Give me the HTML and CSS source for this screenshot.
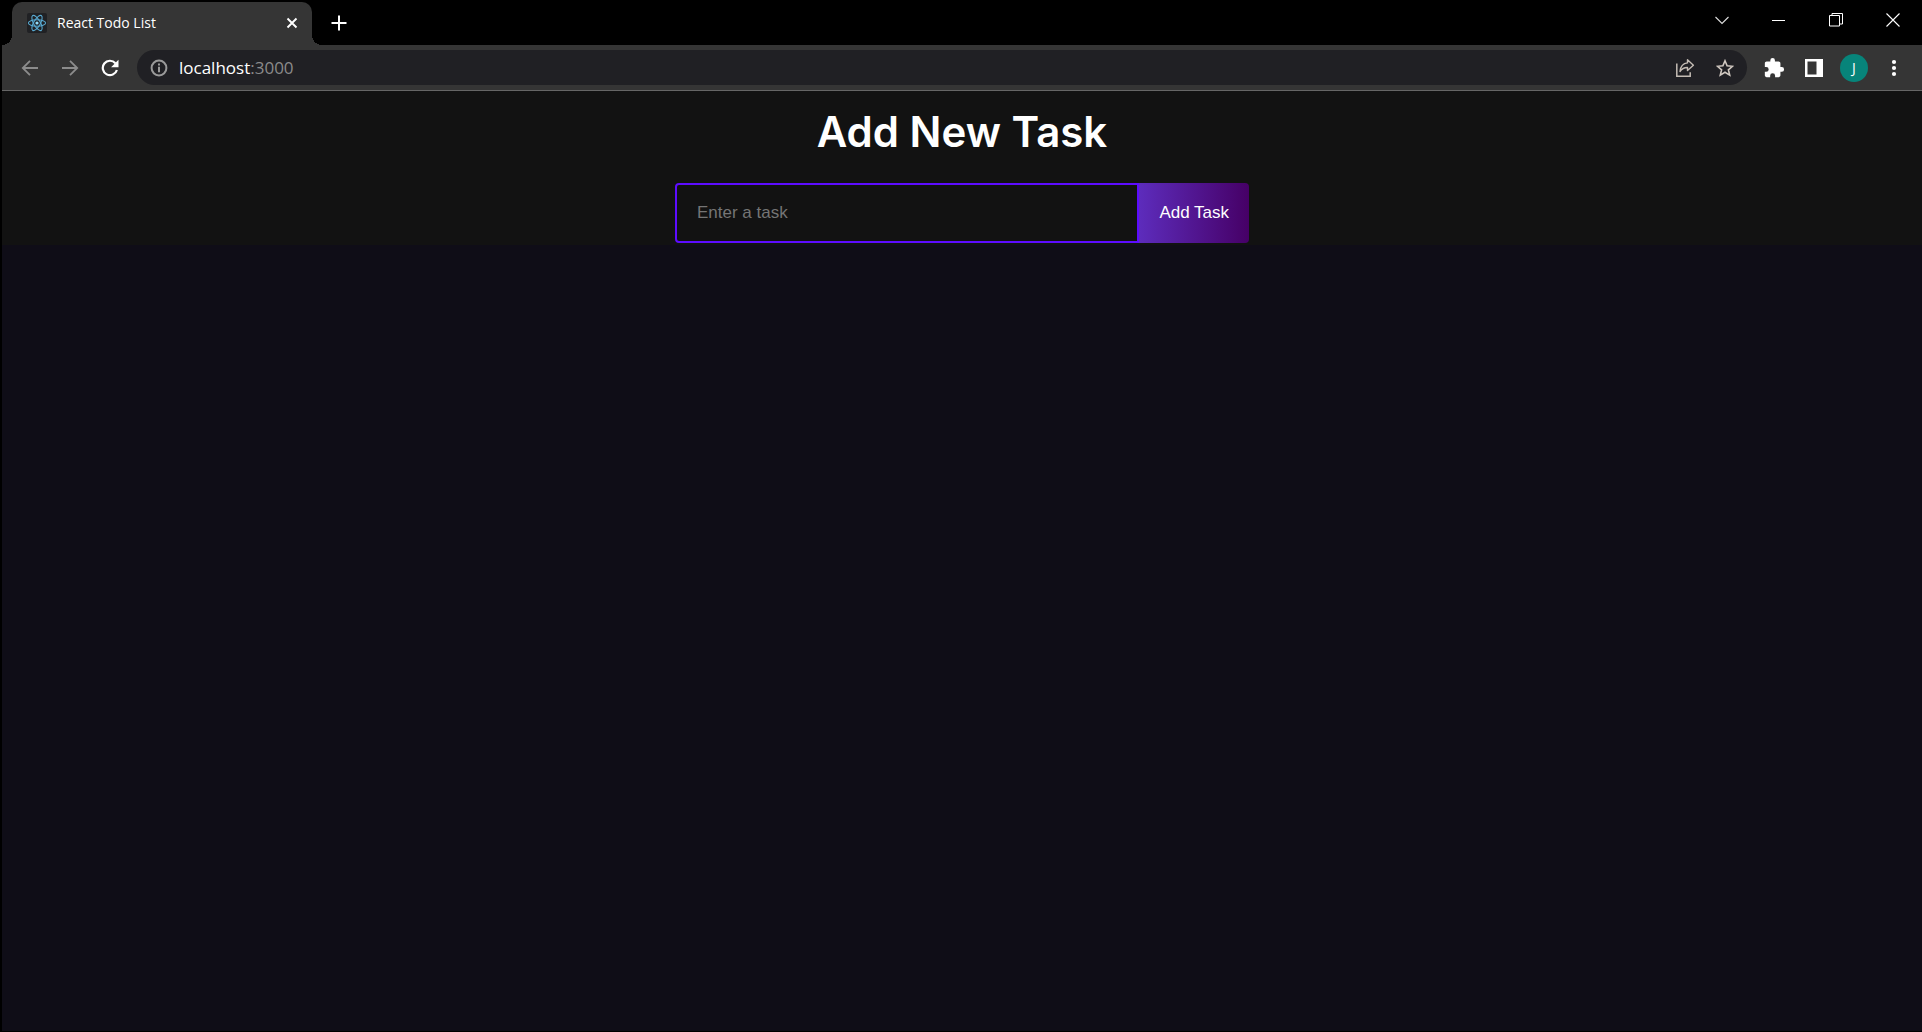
FILE: index.html
```html
<!DOCTYPE html>
<html lang="en">
<head>
<meta charset="utf-8">
<meta name="viewport" content="width=device-width, initial-scale=1">
<title>React Todo List</title>
<link rel="stylesheet" href="styles.css">
</head>
<body>
<div class="browser">
  <div class="titlebar">
    <div class="tab">
      <svg class="favicon" width="20" height="20" viewBox="0 0 20 20" aria-hidden="true">
        <rect width="20" height="20" rx="2" fill="#202124"/>
        <g fill="none" stroke="#58a9d0" stroke-width="1.1">
          <ellipse cx="10" cy="10" rx="8.6" ry="3.3"/>
          <ellipse cx="10" cy="10" rx="8.6" ry="3.3" transform="rotate(60 10 10)"/>
          <ellipse cx="10" cy="10" rx="8.6" ry="3.3" transform="rotate(120 10 10)"/>
        </g>
        <circle cx="10" cy="10" r="1.6" fill="#8fdcfa"/>
      </svg>
      <span class="tab-title">React Todo List</span>
      <button class="tab-close" type="button" aria-label="Close tab">
        <svg width="12" height="12" viewBox="0 0 12 12"><path d="M1.5 1.5l9 9M10.500 1.5l-9 9" stroke="#fff" stroke-width="1.9"/></svg>
      </button>
    </div>
    <button class="new-tab" type="button" aria-label="New tab">
      <svg width="16" height="16" viewBox="0 0 16 16"><path d="M8 .5v15M.5 8h15" stroke="#fff" stroke-width="2"/></svg>
    </button>
    <div class="window-controls">
      <button type="button" aria-label="Search tabs"><svg width="14" height="14" viewBox="0 0 14 14"><path d="M.5 4L7 10.500 13.500 4" fill="none" stroke="#ddd" stroke-width="1.1"/></svg></button>
      <button type="button" aria-label="Minimize"><svg width="14" height="14" viewBox="0 0 14 14"><path d="M0 7.500h13" stroke="#fff"/></svg></button>
      <button type="button" aria-label="Restore"><svg width="14" height="14" viewBox="0 0 14 14"><path d="M.5 2.500h10v10.500H.5zM3 2.500V.5h10.500v10.500H11" fill="none" stroke="#fff"/></svg></button>
      <button type="button" aria-label="Close"><svg width="14" height="14" viewBox="0 0 14 14"><path d="M.5 .5l13 13M13.500 .5l-13 13" stroke="#fff" stroke-width="1.1"/></svg></button>
    </div>
  </div>

  <div class="toolbar">
    <button class="nav" type="button" aria-label="Back"><svg width="18" height="16" viewBox="0 0 18 16"><path d="M17 8H2M9 .8L1.800 8 9 15.200" fill="none" stroke="#8c8c8c" stroke-width="1.8"/></svg></button>
    <button class="nav" type="button" aria-label="Forward"><svg width="18" height="16" viewBox="0 0 18 16"><path d="M1 8h15M9 .8L16.200 8 9 15.200" fill="none" stroke="#8c8c8c" stroke-width="1.8"/></svg></button>
    <button class="nav" type="button" aria-label="Reload"><svg width="20" height="18" viewBox="0 0 20 18"><path d="M15.400 4.200A7.200 7.200 0 1 0 16.900 11" fill="none" stroke="#fff" stroke-width="2.2"/><path d="M18.500 .8v7.400h-7.400z" fill="#fff"/></svg></button>
    <div class="omnibox">
      <svg class="info" width="18" height="18" viewBox="0 0 18 18" aria-hidden="true"><circle cx="9" cy="9" r="7.400" fill="none" stroke="#9a9a9a" stroke-width="2"/><path d="M9 4.500v2M9 7.800v5.400" stroke="#9a9a9a" stroke-width="2"/></svg>
      <span class="url">localhost<span class="port">:3000</span></span>
      <button class="box-action" type="button" aria-label="Share"><svg width="20" height="20" viewBox="0 0 20 20"><path d="M1.800 5.500v12.700h13.400v-4" fill="none" stroke="#c4bcb4" stroke-width="1.500"/><path d="M12.500 1.800L18.400 7.200 12.500 12.600V9.500C9 9.400 6.800 10.800 5 13.500 5.500 8.500 8 5.300 12.500 4.900z" fill="none" stroke="#c4bcb4" stroke-width="1.400" stroke-linejoin="round"/></svg></button>
      <button class="box-action" type="button" aria-label="Bookmark"><svg width="18" height="18" viewBox="0 0 18 18"><path d="M9 1.800l2.100 5 5.400.5-4.100 3.500 1.300 5.300L9 13.300l-4.700 2.800 1.300-5.300L1.500 7.300l5.400-.5z" fill="none" stroke="#d0c8c0" stroke-width="1.600"/></svg></button>
    </div>
    <button class="tool" type="button" aria-label="Extensions"><svg width="22" height="22" viewBox="0 0 24 24"><path fill="#fff" d="M20.500 11H19V7c0-1.100-.9-2-2-2h-4V3.500a2.500 2.500 0 0 0-5 0V5H4c-1.100 0-2 .9-2 2v3.800h1.500a2.700 2.700 0 0 1 0 5.400H2V20c0 1.100.9 2 2 2h3.800v-1.500a2.700 2.700 0 0 1 5.400 0V22H17c1.100 0 2-.9 2-2v-4h1.500a2.500 2.500 0 0 0 0-5z"/></svg></button>
    <button class="tool" type="button" aria-label="Side panel"><svg width="18" height="18" viewBox="0 0 18 18"><path fill="#fff" fill-rule="evenodd" d="M0 0h18v18H0zM2.500 2.500v13h9v-13z"/></svg></button>
    <button class="tool avatar" type="button">J</button>
    <button class="tool" type="button" aria-label="Menu"><svg width="6" height="18" viewBox="0 0 6 18"><g fill="#fff"><circle cx="3" cy="3" r="2.100"/><circle cx="3" cy="9" r="2.100"/><circle cx="3" cy="15" r="2.100"/></g></svg></button>
  </div>

  <main class="page">
    <header class="task-header">
      <h1>Add New Task</h1>
      <form class="task-form">
        <input type="text" placeholder="Enter a task" aria-label="Task">
        <button type="submit">Add Task</button>
      </form>
    </header>
  </main>
</div>
</body>
</html>
```
FILE: styles.css
```css
* { box-sizing: border-box; }
body { margin: 0; background: #000; color: #fff; font-family: "Open Sans", sans-serif; }
button { margin: 0; padding: 0; border: 0; background: none; color: inherit; font: inherit; }
svg { display: block; flex: none; }

.browser { min-height: 100vh; padding: 0 0 1px 2px; display: flex; flex-direction: column; }

.titlebar { height: 45px; padding: 0 1px 0 10px; display: flex; align-items: flex-start; }
.tab {
  position: relative; align-self: flex-end; width: 300px; height: 43px;
  padding: 0 14px 2px 15px; display: flex; align-items: center; gap: 10px;
  background: #353535; border-radius: 10px 10px 0 0;
}
.tab::before, .tab::after { content: ""; position: absolute; bottom: 0; width: 10px; height: 10px; }
.tab::before { left: -10px; background: radial-gradient(circle at 0 0, transparent 10px, #353535 10px); }
.tab::after { right: -10px; background: radial-gradient(circle at 100% 0, transparent 10px, #353535 10px); }
.tab-title { flex: 1; font-size: 14px; line-height: 20px; }
.new-tab { width: 54px; height: 46px; display: grid; place-items: center; }
.window-controls { margin-left: auto; display: flex; }
.window-controls button { width: 57px; height: 40px; display: grid; place-items: center; }

.toolbar {
  height: 46px; padding: 0 8px; display: flex; align-items: center;
  background: #353535; border-bottom: 1px solid #666;
}
.nav { width: 40px; height: 40px; display: grid; place-items: center; }
.omnibox {
  flex: 1; height: 35px; margin: 0 7px; padding: 0 2px 0 13px;
  display: flex; align-items: center; background: #202024; border-radius: 18px;
}
.url { flex: 1; margin-left: 11px; font-size: 17px; line-height: 24px; }
.port { color: #8b8b8b; }
.box-action { width: 40px; height: 35px; display: grid; place-items: center; }
.tool { width: 40px; height: 40px; display: grid; place-items: center; }
.avatar {
  width: 28px; height: 28px; margin: 0 6px; border-radius: 50%;
  background: #07847a; font-size: 14px; line-height: 28px;
}

.page { flex: 1; background: #0f0d17; }
.task-header { padding: 16px 20px 2px; background: #121212; }
h1 { margin: 0 0 26px; font: 600 42px/50px Inter, sans-serif; text-align: center; }
.task-form { width: 100%; max-width: 574px; margin: 0 auto; display: flex; }
.task-form input {
  flex: 1; min-width: 0; height: 60px; padding: 0 20px; outline: 0;
  border: 2px solid #5d0cff; border-radius: 4px 0 0 4px; background: transparent;
  color: #fff; font: 17px "Liberation Sans", sans-serif;
}
.task-form input::placeholder { color: #757575; }
.task-form button {
  height: 60px; padding: 0 20px; border-radius: 0 4px 4px 0;
  background: linear-gradient(90deg, #5d2cbc, #460066);
  font: 17px "Liberation Sans", sans-serif;
}
```
